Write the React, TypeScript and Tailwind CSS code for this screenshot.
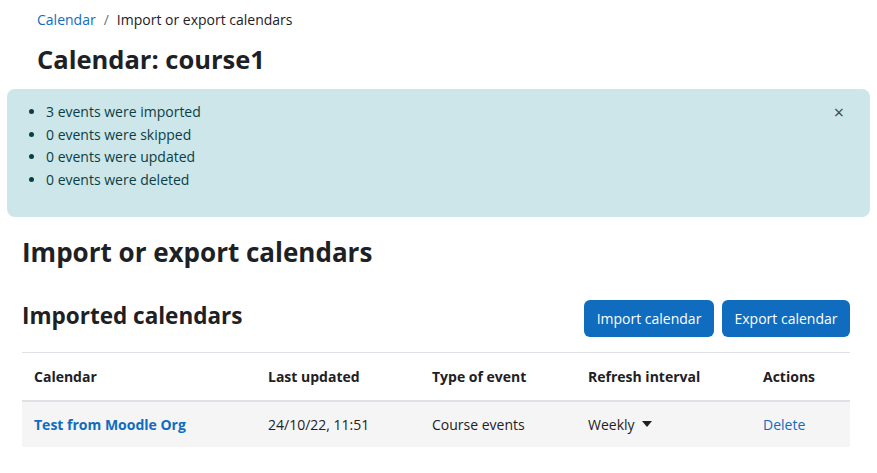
const font = { fontFamily: '"Open Sans", "Noto Sans", sans-serif' }

export default function App() {
  return (
    <div className="w-[877px] h-[473px] bg-white text-[#1d2125] overflow-hidden" style={font}>
      <div className="px-[37px] pt-[10px]">
        <nav className="flex items-center text-[14px] leading-[20px]">
          <a href="#" className="text-[#0f6cbf]">Calendar</a>
          <span className="px-[8px] text-[#6a737b]">/</span>
          <span>Import or export calendars</span>
        </nav>
        <h1 className="mt-[14px] text-[25.5px] leading-[30px] font-bold">Calendar: course1</h1>
      </div>

      <div className="mx-[7px] mt-[15px] h-[128px] rounded-[8px] bg-[#cce6ea] text-[#0b3e44] flex justify-between pl-[21px] pr-[26px] pt-[12px]">
        <ul className="list-disc pl-[18px] text-[14px] leading-[22.5px]">
          <li>3 events were imported</li>
          <li>0 events were skipped</li>
          <li>0 events were updated</li>
          <li>0 events were deleted</li>
        </ul>
        <button className="h-[22px] text-[#3f4a4d] text-[18px] leading-[22px]">×</button>
      </div>

      <div className="pl-[22px] pr-[27px]">
        <h2 className="mt-[19px] text-[26px] leading-[32px] font-bold">Import or export calendars</h2>
        <div className="mt-[32px] flex items-center justify-between">
          <h3 className="mb-[6px] text-[22.5px] leading-[28px] font-bold">Imported calendars</h3>
          <div className="flex gap-[8px]">
            <button className="h-[37px] w-[130px] rounded-[6px] bg-[#0f6cbf] text-white text-[14px]">Import calendar</button>
            <button className="h-[37px] w-[128px] rounded-[6px] bg-[#0f6cbf] text-white text-[14px]">Export calendar</button>
          </div>
        </div>
        <table className="mt-[15px] w-[828px] text-[14px] border-t border-[#dee2e6]">
          <thead>
            <tr className="h-[48px] border-b-2 border-[#dee2e6] text-left">
              <th className="pl-[12px] w-[234px] font-bold">Calendar</th>
              <th className="pl-[12px] w-[164px] font-bold">Last updated</th>
              <th className="pl-[12px] w-[156px] font-bold">Type of event</th>
              <th className="pl-[12px] w-[175px] font-bold">Refresh interval</th>
              <th className="pl-[12px] font-bold">Actions</th>
            </tr>
          </thead>
          <tbody>
            <tr className="h-[46px] bg-[#f5f5f5]">
              <td className="pl-[12px] font-bold text-[#0f6cbf]">Test from Moodle Org</td>
              <td className="pl-[12px]">24/10/22, 11:51</td>
              <td className="pl-[12px]">Course events</td>
              <td className="pl-[12px]">
                <span className="inline-flex items-center gap-[7px]">
                  Weekly
                  <svg width="10" height="6" viewBox="0 0 10 6"><path d="M0 0h10L5 6z" fill="#1d2125" /></svg>
                </span>
              </td>
              <td className="pl-[12px] text-[#0f6cbf]">Delete</td>
            </tr>
          </tbody>
        </table>
      </div>
    </div>
  )
}
